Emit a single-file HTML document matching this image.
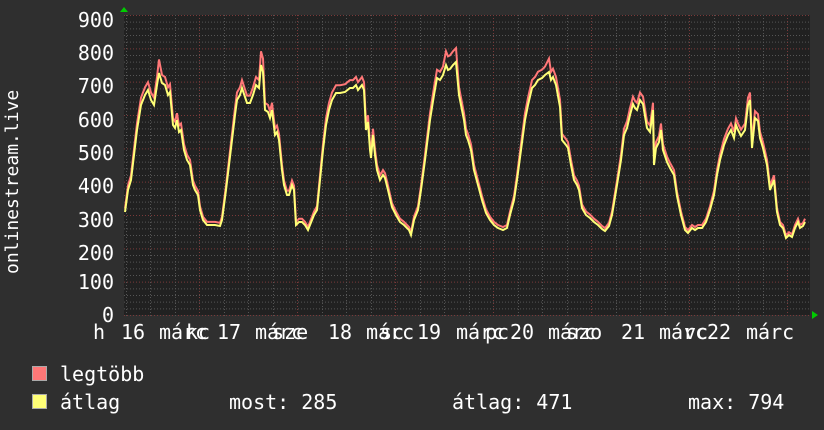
<!DOCTYPE html>
<html><head><meta charset="utf-8"><style>
html,body{margin:0;padding:0;background:#2f2f2f;}
body{width:824px;height:430px;overflow:hidden;position:relative;font-family:"DejaVu Sans Mono","Liberation Mono",monospace;color:#fff;font-size:20px;}
.t{position:absolute;white-space:pre;line-height:20px;}
.yl{position:absolute;right:710px;text-align:right;line-height:20px;}
.sq{position:absolute;width:13px;height:13px;border:1px solid #aaa;}
</style></head><body>
<svg width="824" height="430" style="position:absolute;left:0;top:0" id="s">
<rect x="124" y="15" width="686" height="300" fill="#212121"/>
<g id="grid"></g>
<polyline id="red" fill="none" stroke="#ff7777" stroke-width="2"/>
<polyline id="yel" fill="none" stroke="#ffff77" stroke-width="2"/>
<polygon points="120,12 128,12 124,7" fill="#00cc00"/>
<polygon points="812,311 812,319 818,315" fill="#00cc00"/>
</svg>
<div class="t" style="left:0;top:0;font-size:18px;transform-origin:0 0;transform:translate(3px,274px) rotate(-90deg);">onlinestream.live</div>
<div class="yl" style="top:10px">900</div>
<div class="yl" style="top:43px">800</div>
<div class="yl" style="top:76px">700</div>
<div class="yl" style="top:110px">600</div>
<div class="yl" style="top:143px">500</div>
<div class="yl" style="top:176px">400</div>
<div class="yl" style="top:210px">300</div>
<div class="yl" style="top:243px">200</div>
<div class="yl" style="top:272px">100</div>
<div class="yl" style="top:305px">0</div>
<div class="t" style="left:93px;top:322px">h</div>
<div class="t" style="left:121px;top:322px">16</div>
<div class="t" style="left:159px;top:322px">márc</div>
<div class="t" style="left:186px;top:322px">kc</div>
<div class="t" style="left:217px;top:322px">17</div>
<div class="t" style="left:255px;top:322px">márc</div>
<div class="t" style="left:272px;top:322px">sze</div>
<div class="t" style="left:328px;top:322px">18</div>
<div class="t" style="left:366px;top:322px">márc</div>
<div class="t" style="left:380px;top:322px">sc</div>
<div class="t" style="left:417px;top:322px">19</div>
<div class="t" style="left:456px;top:322px">márc</div>
<div class="t" style="left:485px;top:322px">pc</div>
<div class="t" style="left:510px;top:322px">20</div>
<div class="t" style="left:548px;top:322px">márc</div>
<div class="t" style="left:566px;top:322px">szo</div>
<div class="t" style="left:621px;top:322px">21</div>
<div class="t" style="left:659px;top:322px">márc</div>
<div class="t" style="left:684px;top:322px">vc</div>
<div class="t" style="left:707px;top:322px">22</div>
<div class="t" style="left:746px;top:322px">márc</div>
<div class="sq" style="left:32px;top:366px;background:#ff7777"></div>
<div class="sq" style="left:32px;top:394px;background:#ffff77"></div>
<div class="t" style="left:60px;top:364px">legtöbb</div>
<div class="t" style="left:60px;top:392px">átlag</div>
<div class="t" style="left:229px;top:392px">most: 285</div>
<div class="t" style="left:452px;top:392px">átlag: 471</div>
<div class="t" style="left:688px;top:392px">max: 794</div>
<script>
var g=document.getElementById("grid"),h="";
for(var i=0;i<=45;i++){var y=315-i*300/45;var red=(i%5==0);
h+='<line x1="124" x2="810" y1="'+(y+0.5)+'" y2="'+(y+0.5)+'" stroke="'+(red?'#7a3a3a':'#555')+'" stroke-dasharray="1,2"/>';}
for(var x=125.5;x<810;x+=24.5){var red=Math.abs(((x-199)/98)-Math.round((x-199)/98))<0.01;
h+='<line y1="15" y2="318" x1="'+(Math.round(x)+0.5)+'" x2="'+(Math.round(x)+0.5)+'" stroke="'+(red?'#7a3a3a':'#555')+'" stroke-dasharray="1,2"/>';}
g.innerHTML=h;
var P=[125,212,128,190,131,180,134,155,137,130,141,105,145,95,148,90,151,100,154,105,157,85,159,73,162,83,165,85,168,95,170,92,173,125,175,128,177,120,179,132,181,130,184,150,187,160,190,165,193,185,195,190,198,195,200,210,203,220,207,225,212,225,215,225,220,226,222,220,224,205,226,190,229,165,232,140,235,115,237,100,240,95,242,88,245,97,247,103,250,103,253,95,256,85,259,88,261,65,263,72,265,110,268,112,270,118,272,110,275,135,277,132,279,140,282,170,284,185,287,195,289,195,292,185,294,190,296,225,299,222,302,222,305,225,308,230,310,225,314,215,317,210,320,180,323,150,326,125,329,110,332,100,336,93,340,93,345,92,350,88,353,88,356,85,358,90,362,85,364,90,366,130,368,122,370,150,371,158,373,135,375,155,377,170,380,180,383,175,385,178,388,190,392,207,396,215,400,222,404,225,409,230,411,235,414,220,418,210,421,190,425,160,430,120,434,95,437,78,440,80,443,75,446,65,448,70,450,69,453,65,456,62,459,95,462,110,464,120,466,135,468,140,471,150,474,170,478,185,482,200,486,213,490,220,494,225,498,228,503,230,507,228,510,215,514,200,517,180,521,150,525,120,528,105,532,88,535,85,538,80,542,78,545,75,549,72,551,80,553,77,556,85,560,107,562,140,566,145,568,148,571,165,574,180,577,185,579,190,582,208,586,215,590,218,594,222,598,225,602,229,605,231,609,226,612,215,617,185,621,160,624,135,627,128,630,115,633,104,635,108,637,110,640,100,643,104,647,128,650,132,653,110,654,165,656,148,659,142,661,130,663,150,667,162,670,168,674,175,677,196,681,215,685,230,688,233,692,228,695,230,698,228,702,228,706,222,710,210,714,195,717,175,720,160,724,145,728,135,731,130,734,138,736,125,738,130,741,136,745,130,748,105,750,100,752,148,755,118,758,121,760,138,763,148,767,165,770,190,774,180,777,212,780,225,783,228,786,238,789,235,792,237,795,228,798,222,800,228,803,226,805,222];
var ys="",rs="";
for(var i=0;i<P.length;i+=2){var x=P[i],y=P[i+1];ys+=x+","+y+" ";
var r=315-(315-y)*1.035;if(y<75)r-=5;rs+=x+","+r.toFixed(1)+" ";}
document.getElementById("yel").setAttribute("points",ys);
document.getElementById("red").setAttribute("points",rs);
</script>
</body></html>
